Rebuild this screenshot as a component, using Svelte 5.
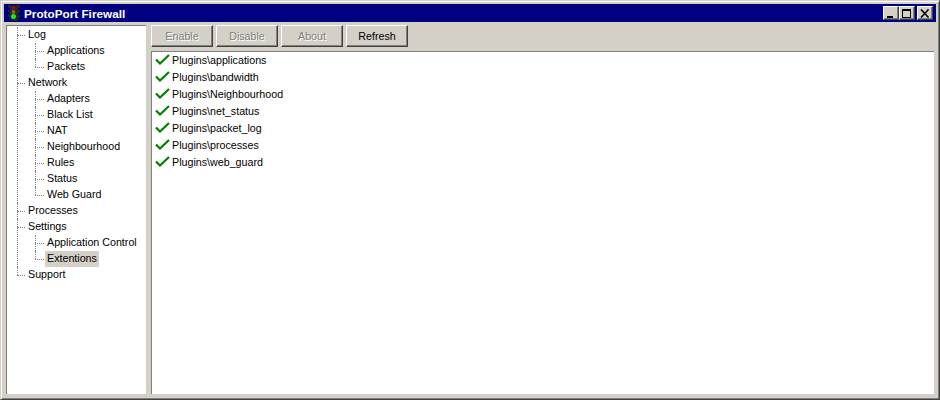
<script lang="ts">
  const tree = [
    { label: "Log", children: ["Applications", "Packets"] },
    { label: "Network", children: ["Adapters", "Black List", "NAT", "Neighbourhood", "Rules", "Status", "Web Guard"] },
    { label: "Processes", children: [] },
    { label: "Settings", children: ["Application Control", "Extentions"] },
    { label: "Support", children: [] },
  ];
  const selected = "Extentions";
  const buttons = [
    { label: "Enable", disabled: true },
    { label: "Disable", disabled: true },
    { label: "About", disabled: true },
    { label: "Refresh", disabled: false },
  ];
  const plugins = ["applications", "bandwidth", "Neighbourhood", "net_status", "packet_log", "processes", "web_guard"];
</script>

<div class="window">
  <header class="titlebar">
    <svg class="app-icon" width="16" height="16" viewBox="0 0 16 16" aria-hidden="true">
      <path d="M3 0h3v1h5V0h4v2l-2 2v1h2v2l-2 2v1h2v2l-2 2v2H6v-2L4 12 3 10h2V9L3 7V5h2V4L3 2z" fill="#26262a" />
      <circle cx="8.500" cy="2.500" r="1.900" fill="#8a1010" />
      <circle cx="8.500" cy="7" r="1.900" fill="#807010" />
      <circle cx="8.500" cy="11.500" r="2.500" fill="#14f014" />
    </svg>
    <span class="title">ProtoPort Firewall</span>
    <div class="controls">
      <button class="ctl" aria-label="Minimize">
        <svg width="10" height="9" viewBox="0 0 10 9"><rect x="1" y="7" width="6" height="2" fill="#000" /></svg>
      </button>
      <button class="ctl" aria-label="Maximize">
        <svg width="10" height="9" viewBox="0 0 10 9"><path d="M0 0h9v9H0zM1 2v6h7V2z" fill="#000" fill-rule="evenodd" /></svg>
      </button>
      <button class="ctl close" aria-label="Close">
        <svg width="10" height="9" viewBox="0 0 10 9"><path d="M1 .5 8.500 8.500M8.500 .5 1 8.500" fill="none" stroke="#000" stroke-width="1.600" /></svg>
      </button>
    </div>
  </header>

  <div class="body">
    <nav class="tree">
      <ul class="root">
        {#each tree as node}
          <li>
            <span class="label">{node.label}</span>
            {#if node.children.length}
              <ul class="sub">
                {#each node.children as child}
                  <li><span class="label" class:selected={child === selected}>{child}</span></li>
                {/each}
              </ul>
            {/if}
          </li>
        {/each}
      </ul>
    </nav>

    <main class="pane">
      <div class="toolbar">
        {#each buttons as b}
          <button class="btn" disabled={b.disabled}>{b.label}</button>
        {/each}
      </div>
      <ul class="list">
        {#each plugins as p}
          <li>
            <svg width="16" height="15" viewBox="0 0 16 15" aria-hidden="true">
              <path d="M1 6.500 5 10.500 14 2" fill="none" stroke="#008000" stroke-width="2.200" />
            </svg>
            <span>Plugins\{p}</span>
          </li>
        {/each}
      </ul>
    </main>
  </div>
</div>

<style>
  :global(body) {
    margin: 0;
    background: #d4d0c8;
  }

  .window {
    box-sizing: border-box;
    width: 940px;
    height: 400px;
    display: flex;
    flex-direction: column;
    padding: 3px;
    background: #d4d0c8;
    border: 1px solid;
    border-color: #d4d0c8 #404040 #404040 #d4d0c8;
    box-shadow: inset 1px 1px 0 #fff, inset -1px -1px 0 #808080;
    font-family: "Liberation Sans", Arial, sans-serif;
    font-size: 10.700px;
    color: #000;
  }

  .titlebar {
    flex: none;
    height: 18px;
    display: flex;
    align-items: center;
    padding: 0 3px 0 1px;
    background: #000080;
    color: #fff;
  }

  .app-icon {
    flex: none;
    margin-right: 3px;
  }

  .title {
    font-weight: 700;
    font-size: 11.750px;
  }

  .controls {
    margin-left: auto;
    display: flex;
  }

  .ctl {
    box-sizing: border-box;
    width: 16px;
    height: 14px;
    padding: 0;
    display: flex;
    align-items: center;
    justify-content: center;
    background: #d4d0c8;
    border: 1px solid;
    border-color: #fff #404040 #404040 #fff;
    box-shadow: inset -1px -1px 0 #808080;
  }

  .close {
    margin-left: 2px;
  }

  .body {
    flex: 1;
    min-height: 0;
    display: flex;
    gap: 5px;
    padding: 3px 2px 2px 2px;
  }

  .tree {
    box-sizing: border-box;
    flex: none;
    width: 140px;
    background: #fff;
    border-top: 1px solid #808080;
    border-left: 1px solid #808080;
    overflow: hidden;
  }

  ul {
    list-style: none;
    margin: 0;
    padding: 0;
  }

  .root {
    padding-left: 19px;
    padding-top: 1px;
  }

  .root > li,
  .sub > li {
    position: relative;
  }

  .label {
    display: inline-block;
    height: 16px;
    line-height: 15px;
    padding: 0 2px;
    vertical-align: top;
  }

  .label.selected {
    background: #d4d0c8;
  }

  /* dotted connectors */
  .root > li::before,
  .sub > li::before {
    content: "";
    position: absolute;
    left: -9px;
    top: 8px;
    width: 8px;
    border-top: 1px dotted #808080;
  }

  .root > li::after,
  .sub > li::after {
    content: "";
    position: absolute;
    left: -9px;
    top: 0;
    bottom: 0;
    border-left: 1px dotted #808080;
  }

  .root > li:last-child::after,
  .sub > li:last-child::after {
    bottom: auto;
    height: 8px;
  }

  .sub {
    padding-left: 19px;
  }

  .sub > li::before,
  .sub > li::after {
    left: -10px;
  }

  .sub > li::before {
    width: 9px;
  }

  .pane {
    flex: 1;
    min-width: 0;
    display: flex;
    flex-direction: column;
  }

  .toolbar {
    flex: none;
    height: 26px;
    display: flex;
    gap: 3px;
    align-items: flex-start;
  }

  .btn {
    box-sizing: border-box;
    width: 62px;
    height: 22px;
    padding: 0;
    background: #d4d0c8;
    border: 1px solid;
    border-color: #fff #404040 #404040 #fff;
    box-shadow: inset -1px -1px 0 #808080;
    font: inherit;
    color: #000;
  }

  .btn:disabled {
    color: #808080;
    text-shadow: 1px 1px 0 #fff;
  }

  .list {
    flex: 1;
    background: #fff;
    border-top: 1px solid #808080;
    border-left: 1px solid #808080;
    padding-left: 3px;
  }

  .list li {
    height: 17px;
    display: flex;
    align-items: center;
    gap: 1px;
  }

  .list span {
    line-height: 15px;
    margin-bottom: 1px;
  }
</style>
